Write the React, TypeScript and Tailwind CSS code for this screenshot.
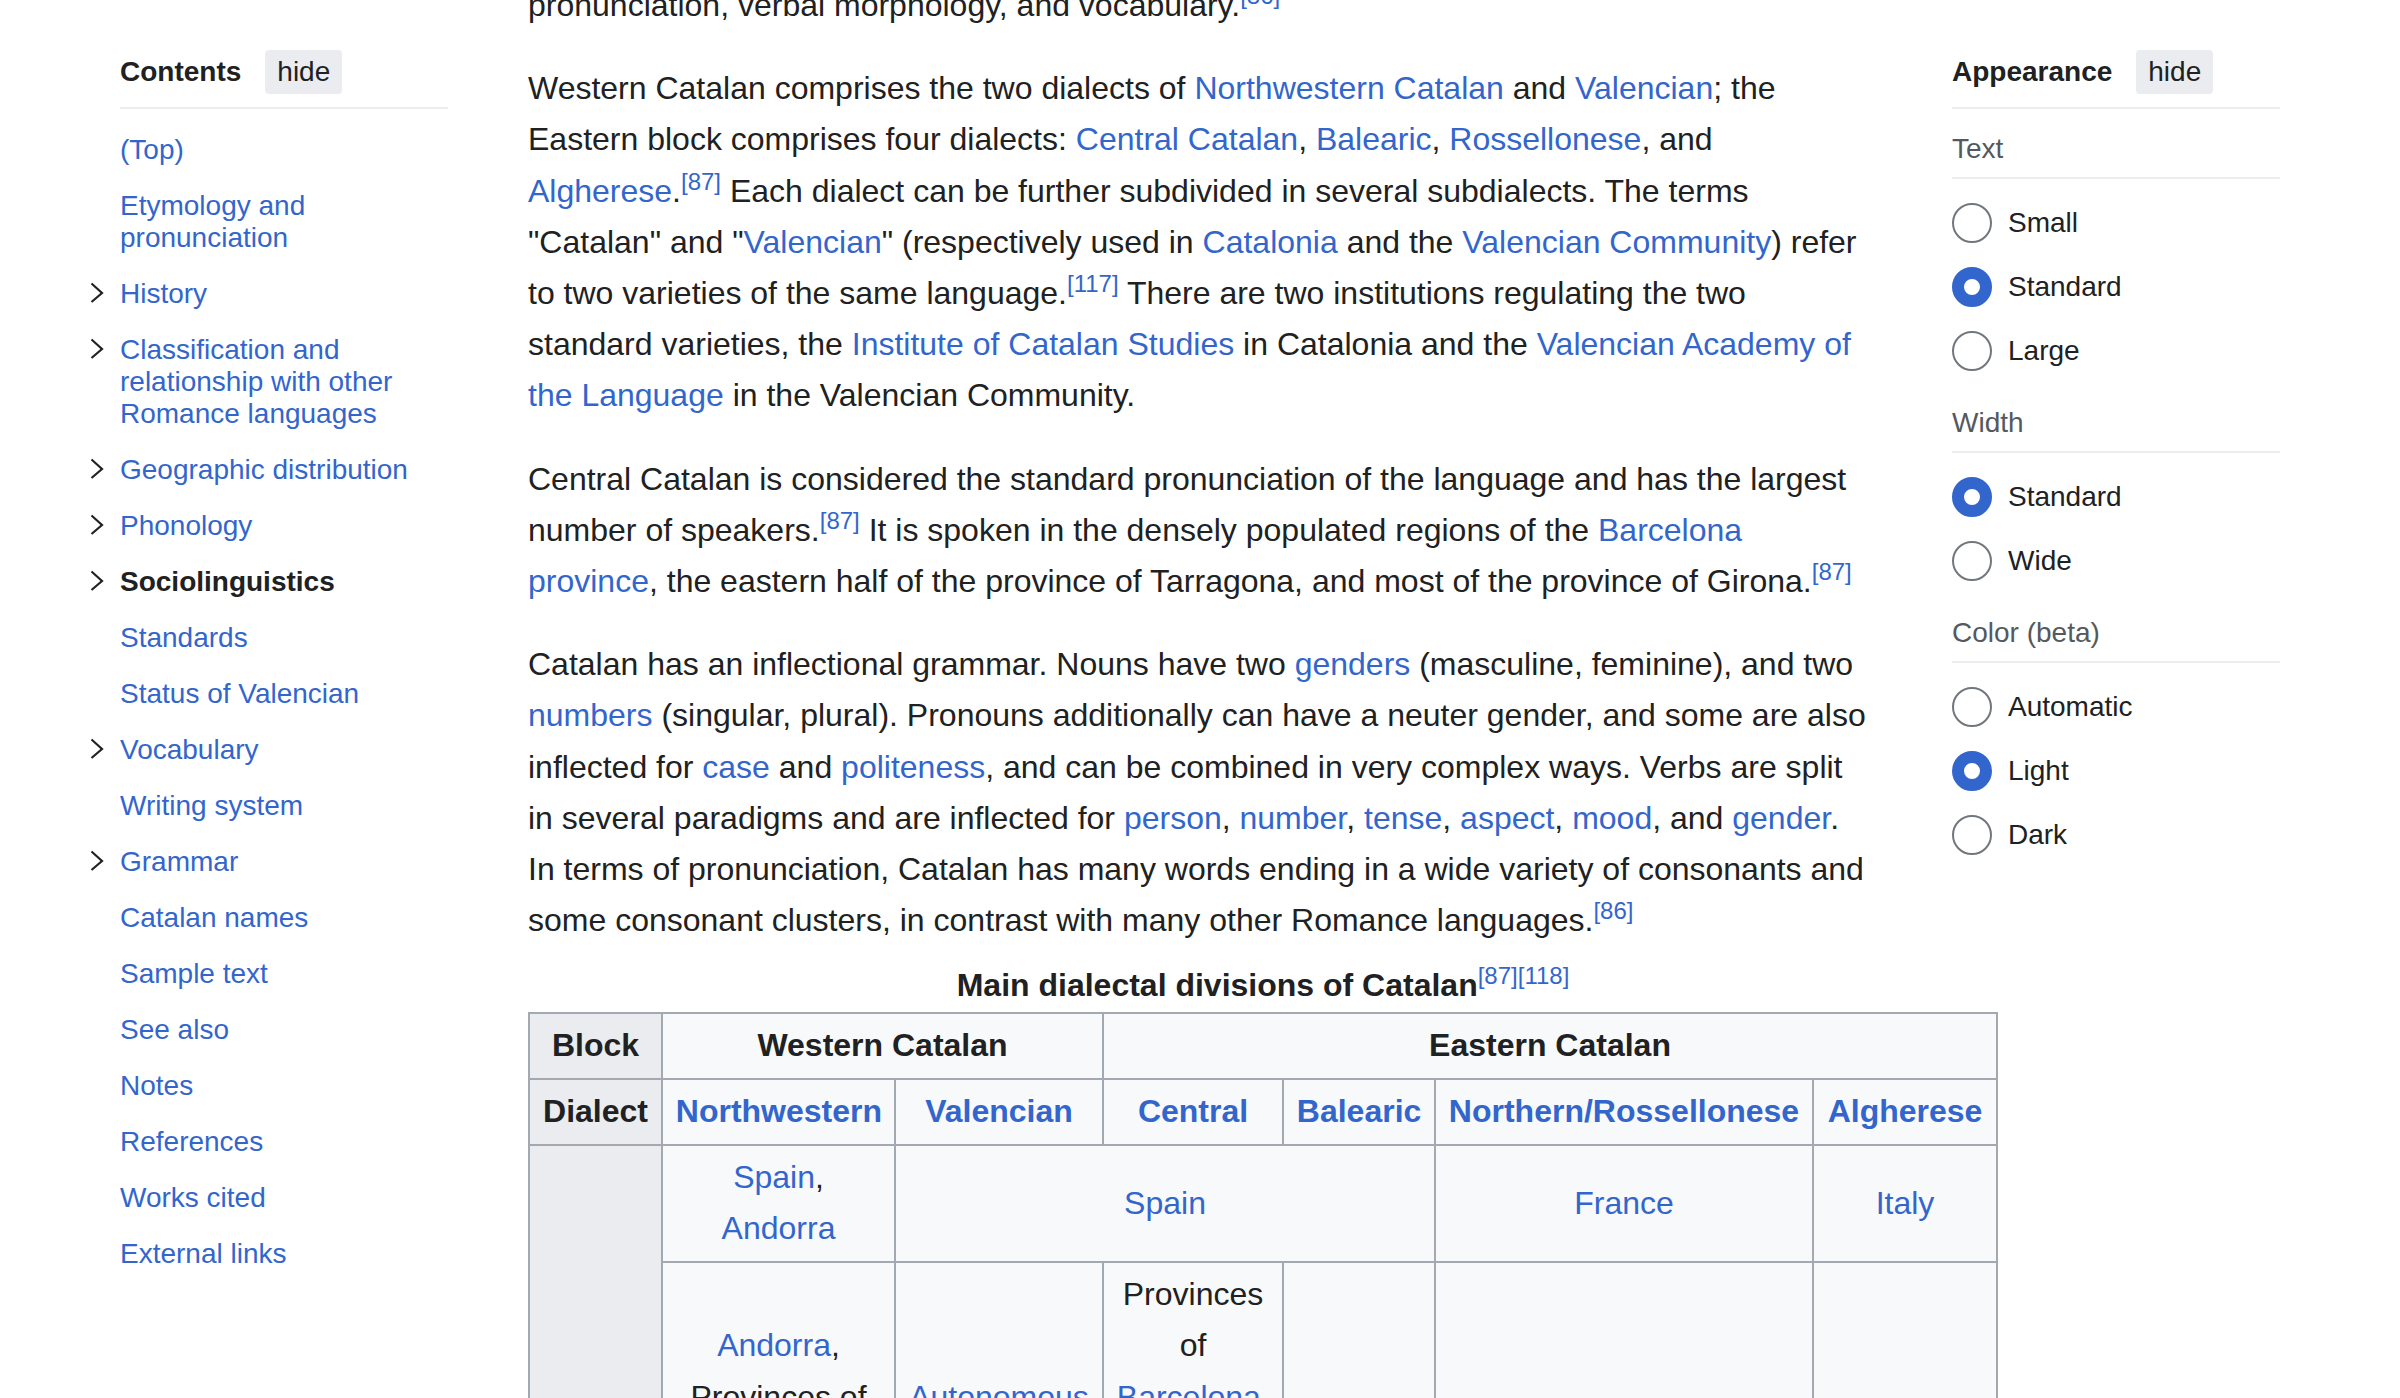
import type { ReactNode } from 'react';

const toc = [
  { label: '(Top)', chevron: false },
  { label: 'Etymology and pronunciation', chevron: false },
  { label: 'History', chevron: true },
  { label: 'Classification and relationship with other Romance languages', chevron: true },
  { label: 'Geographic distribution', chevron: true },
  { label: 'Phonology', chevron: true },
  { label: 'Sociolinguistics', chevron: true, active: true },
  { label: 'Standards', chevron: false },
  { label: 'Status of Valencian', chevron: false },
  { label: 'Vocabulary', chevron: true },
  { label: 'Writing system', chevron: false },
  { label: 'Grammar', chevron: true },
  { label: 'Catalan names', chevron: false },
  { label: 'Sample text', chevron: false },
  { label: 'See also', chevron: false },
  { label: 'Notes', chevron: false },
  { label: 'References', chevron: false },
  { label: 'Works cited', chevron: false },
  { label: 'External links', chevron: false },
];

const appearance = [
  { title: 'Text', options: ['Small', 'Standard', 'Large'], checked: 'Standard' },
  { title: 'Width', options: ['Standard', 'Wide'], checked: 'Standard' },
  { title: 'Color (beta)', options: ['Automatic', 'Light', 'Dark'], checked: 'Light' },
];

const L = ({ children }: { children: ReactNode }) => (
  <a className="text-[#3366cc] cursor-pointer">{children}</a>
);

const Ref = ({ n }: { n: string }) => <sup className="text-[#3366cc]">[{n}]</sup>;

function Chevron() {
  return (
    <svg width="14" height="21" viewBox="0 0 14 21" className="block">
      <path d="M1.5 1.5 L12 11 L1.5 20" fill="none" stroke="#202122" strokeWidth="2.2" />
    </svg>
  );
}

function HideButton() {
  return (
    <button className="h-[44px] px-[12px] rounded-[4px] bg-[#eaecf0] text-[28px] leading-[32px] text-[#202122]">
      hide
    </button>
  );
}

function Radio({ label, checked }: { label: string; checked: boolean }) {
  return (
    <div className="flex h-[64px] items-center gap-[16px]">
      <span
        className={
          checked
            ? 'w-[40px] h-[40px] rounded-full border-[12px] border-[#3366cc] bg-white'
            : 'w-[40px] h-[40px] rounded-full border-2 border-[#72777d] bg-white'
        }
      />
      <span className="text-[28px] leading-[32px] text-[#202122]">{label}</span>
    </div>
  );
}

const cell = 'border-2 border-[#a2a9b1] px-[12.8px] py-[6.4px]';
const head = `${cell} bg-[#eaecf0] font-bold`;
const data = `${cell} bg-[#f8f9fa]`;

export default function App() {
  return (
    <div className="w-[2400px] h-[1398px] overflow-hidden bg-white text-[#202122] font-['Liberation_Sans',Arial,sans-serif]">
      <div className="flex items-start">
        {/* Table of contents */}
        <nav className="ml-[90px] w-[358px] shrink-0 pt-[50px]">
          <div className="ml-[30px] flex items-center gap-[24px] pb-[13px] border-b-2 border-[#eaecf0]">
            <h2 className="text-[28px] leading-[32px] font-bold">Contents</h2>
            <HideButton />
          </div>
          <ul className="pt-[13px]">
            {toc.map((item) => (
              <li key={item.label} className="flex py-[12px]">
                <span className="w-[30px] shrink-0 pt-[4px]">{item.chevron && <Chevron />}</span>
                <a
                  className={
                    item.active
                      ? 'text-[28px] leading-[32px] font-bold text-[#202122]'
                      : 'text-[28px] leading-[32px] text-[#3366cc]'
                  }
                >
                  {item.label}
                </a>
              </li>
            ))}
          </ul>
        </nav>

        {/* Article body */}
        <main className="ml-[80px] w-[1344px] shrink-0 -mt-[20px] text-[32px] leading-[51.2px] whitespace-nowrap">
          <p className="mb-[32px]">
            pronunciation, verbal morphology, and vocabulary.<Ref n="86" />
          </p>
          <p className="mb-[32px]">
            Western Catalan comprises the two dialects of <L>Northwestern Catalan</L> and <L>Valencian</L>; the
            <br />
            Eastern block comprises four dialects: <L>Central Catalan</L>, <L>Balearic</L>, <L>Rossellonese</L>, and
            <br />
            <L>Algherese</L>.<Ref n="87" /> Each dialect can be further subdivided in several subdialects. The terms
            <br />
            "Catalan" and "<L>Valencian</L>" (respectively used in <L>Catalonia</L> and the <L>Valencian Community</L>) refer
            <br />
            to two varieties of the same language.<Ref n="117" /> There are two institutions regulating the two
            <br />
            standard varieties, the <L>Institute of Catalan Studies</L> in Catalonia and the <L>Valencian Academy of</L>
            <br />
            <L>the Language</L> in the Valencian Community.
          </p>
          <p className="mb-[32px]">
            Central Catalan is considered the standard pronunciation of the language and has the largest
            <br />
            number of speakers.<Ref n="87" /> It is spoken in the densely populated regions of the <L>Barcelona</L>
            <br />
            <L>province</L>, the eastern half of the province of Tarragona, and most of the province of Girona.<Ref n="87" />
          </p>
          <p className="mb-[14px]">
            Catalan has an inflectional grammar. Nouns have two <L>genders</L> (masculine, feminine), and two
            <br />
            <L>numbers</L> (singular, plural). Pronouns additionally can have a neuter gender, and some are also
            <br />
            inflected for <L>case</L> and <L>politeness</L>, and can be combined in very complex ways. Verbs are split
            <br />
            in several paradigms and are inflected for <L>person</L>, <L>number</L>, <L>tense</L>, <L>aspect</L>, <L>mood</L>, and <L>gender</L>.
            <br />
            In terms of pronunciation, Catalan has many words ending in a wide variety of consonants and
            <br />
            some consonant clusters, in contrast with many other Romance languages.<Ref n="86" />
          </p>

          <table className="w-[1468px] table-fixed border-collapse text-center">
            <caption className="font-bold">
              Main dialectal divisions of Catalan
              <sup className="font-normal text-[#3366cc]">[87][118]</sup>
            </caption>
            <colgroup>
              <col className="w-[133px]" />
              <col className="w-[233px]" />
              <col className="w-[208px]" />
              <col className="w-[180px]" />
              <col className="w-[152px]" />
              <col className="w-[378px]" />
              <col className="w-[184px]" />
            </colgroup>
            <tbody>
              <tr>
                <th className={head}>Block</th>
                <th colSpan={2} className={`${data} font-bold`}>Western Catalan</th>
                <th colSpan={4} className={`${data} font-bold`}>Eastern Catalan</th>
              </tr>
              <tr>
                <th className={head}>Dialect</th>
                {['Northwestern', 'Valencian', 'Central', 'Balearic', 'Northern/Rossellonese', 'Algherese'].map((d) => (
                  <th key={d} className={`${data} font-bold`}>
                    <L>{d}</L>
                  </th>
                ))}
              </tr>
              <tr>
                <th rowSpan={2} className={head} />
                <td className={data}>
                  <L>Spain</L>,<br />
                  <L>Andorra</L>
                </td>
                <td colSpan={3} className={data}>
                  <L>Spain</L>
                </td>
                <td className={data}>
                  <L>France</L>
                </td>
                <td className={data}>
                  <L>Italy</L>
                </td>
              </tr>
              <tr>
                <td className={data}>
                  <L>Andorra</L>,<br />
                  Provinces of
                  <br />
                  <L>Lleida</L>,<br />
                  <L>Huesca</L>
                </td>
                <td className={data}>
                  <L>Autonomous</L>
                  <br />
                  <L>Community</L>
                </td>
                <td className={data}>
                  Provinces
                  <br />
                  of
                  <br />
                  <L>Barcelona</L>,<br />
                  <L>Tarragona</L>
                  <br />
                  and
                  <br />
                  <L>Girona</L>
                </td>
                <td className={data} />
                <td className={data} />
                <td className={data} />
              </tr>
            </tbody>
          </table>
        </main>

        {/* Appearance panel */}
        <aside className="ml-[80px] w-[328px] shrink-0 pt-[50px]">
          <div className="flex items-center gap-[24px] pb-[13px] border-b-2 border-[#eaecf0]">
            <h2 className="text-[28px] leading-[32px] font-bold">Appearance</h2>
            <HideButton />
          </div>
          {appearance.map((group) => (
            <section key={group.title} className="mt-[24px]">
              <div className="text-[28px] leading-[32px] text-[#54595d] pb-[12px] border-b-2 border-[#eaecf0]">
                {group.title}
              </div>
              <div className="pt-[12px]">
                {group.options.map((opt) => (
                  <Radio key={opt} label={opt} checked={opt === group.checked} />
                ))}
              </div>
            </section>
          ))}
        </aside>
      </div>
    </div>
  );
}
